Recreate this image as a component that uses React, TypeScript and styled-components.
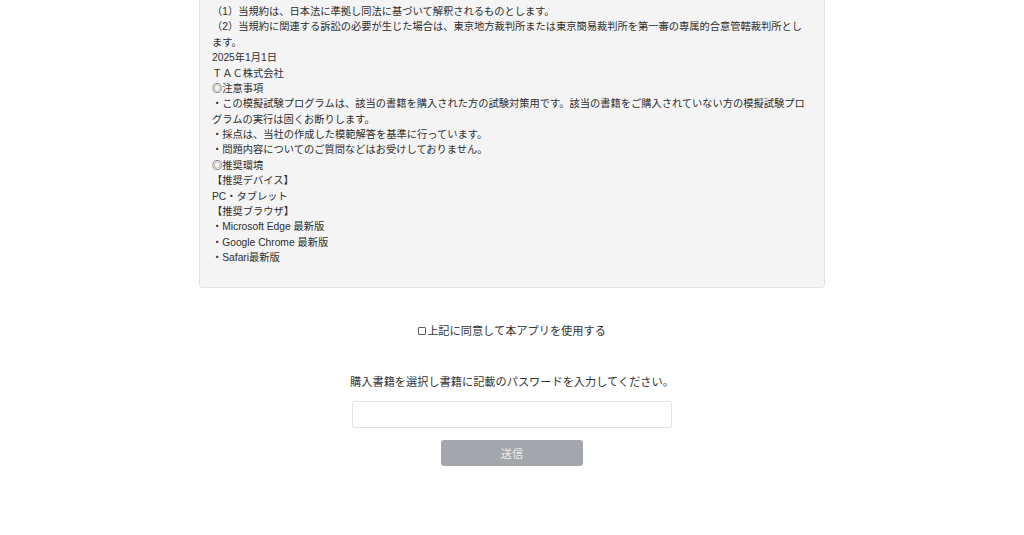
import React, { useState } from 'react'
import styled, { createGlobalStyle } from 'styled-components'

const GlobalStyle = createGlobalStyle`
  html, body {
    margin: 0;
    padding: 0;
    background: #ffffff;
  }
  body {
    font-family: "Liberation Sans", "Noto Sans CJK JP", sans-serif;
    color: #333333;
  }
`

const Page = styled.div`
  display: flex;
  flex-direction: column;
  align-items: center;
  padding-bottom: 60px;
`

const TermsBox = styled.div`
  box-sizing: border-box;
  width: 626px;
  padding: 4px 12px 22px 12px;
  background: #f4f4f4;
  border: 1px solid #e2e2e2;
  border-top: none;
  border-radius: 0 0 4px 4px;
  font-size: 10.25px;
  line-height: 15.375px;
  color: #2e2e2e;
  white-space: nowrap;
`

const Line = styled.div``

const AgreeRow = styled.label`
  display: flex;
  align-items: center;
  margin-top: 35px;
  font-size: 11.2px;
  line-height: 16.8px;
  color: #333333;
  cursor: pointer;
`

const AgreeCheck = styled.input`
  appearance: none;
  box-sizing: border-box;
  width: 8px;
  height: 8px;
  margin: 0 1px 1px 0;
  border: 1px solid #5e5e5e;
  border-radius: 1px;
  background: #ffffff;

  &:checked {
    background: #4a4a4a;
  }
`

const Instruction = styled.p`
  margin: 34px 0 0;
  font-size: 11.2px;
  line-height: 16.8px;
  color: #333333;
`

const PasswordInput = styled.input`
  box-sizing: border-box;
  width: 320px;
  height: 27px;
  margin-top: 10px;
  padding: 0 8px;
  border: 1px solid #dfe2e5;
  border-radius: 3px;
  background: #ffffff;
  font: inherit;
  font-size: 11.2px;
  outline: none;
`

const SubmitButton = styled.button<{ $active: boolean }>`
  box-sizing: border-box;
  width: 142px;
  height: 26px;
  margin-top: 12px;
  border: none;
  border-radius: 3px;
  background: ${(p) => (p.$active ? '#5a6268' : '#a3a6ab')};
  color: #eeeeee;
  font-family: "Liberation Sans", "Noto Sans CJK JP", sans-serif;
  font-size: 11.2px;
  cursor: ${(p) => (p.$active ? 'pointer' : 'default')};
`

const lines = [
  '（1）当規約は、日本法に準拠し同法に基づいて解釈されるものとします。',
  '（2）当規約に関連する訴訟の必要が生じた場合は、東京地方裁判所または東京簡易裁判所を第一審の専属的合意管轄裁判所とし',
  'ます。',
  '2025年1月1日',
  'ＴＡＣ株式会社',
  '◎注意事項',
  '・この模擬試験プログラムは、該当の書籍を購入された方の試験対策用です。該当の書籍をご購入されていない方の模擬試験プロ',
  'グラムの実行は固くお断りします。',
  '・採点は、当社の作成した模範解答を基準に行っています。',
  '・問題内容についてのご質問などはお受けしておりません。',
  '◎推奨環境',
  '【推奨デバイス】',
  'PC・タブレット',
  '【推奨ブラウザ】',
  '・Microsoft Edge 最新版',
  '・Google Chrome 最新版',
  '・Safari最新版',
]

export default function App() {
  const [agreed, setAgreed] = useState(false)
  const [password, setPassword] = useState('')

  return (
    <>
      <GlobalStyle />
      <Page>
        <TermsBox>
          {lines.map((text, i) => (
            <Line key={i}>{text}</Line>
          ))}
        </TermsBox>

        <AgreeRow>
          <AgreeCheck
            type="checkbox"
            checked={agreed}
            onChange={(e) => setAgreed(e.target.checked)}
          />
          上記に同意して本アプリを使用する
        </AgreeRow>

        <Instruction>購入書籍を選択し書籍に記載のパスワードを入力してください。</Instruction>

        <PasswordInput
          type="password"
          value={password}
          onChange={(e) => setPassword(e.target.value)}
        />

        <SubmitButton type="button" disabled={!agreed} $active={agreed && password !== ''}>
          送信
        </SubmitButton>
      </Page>
    </>
  )
}
